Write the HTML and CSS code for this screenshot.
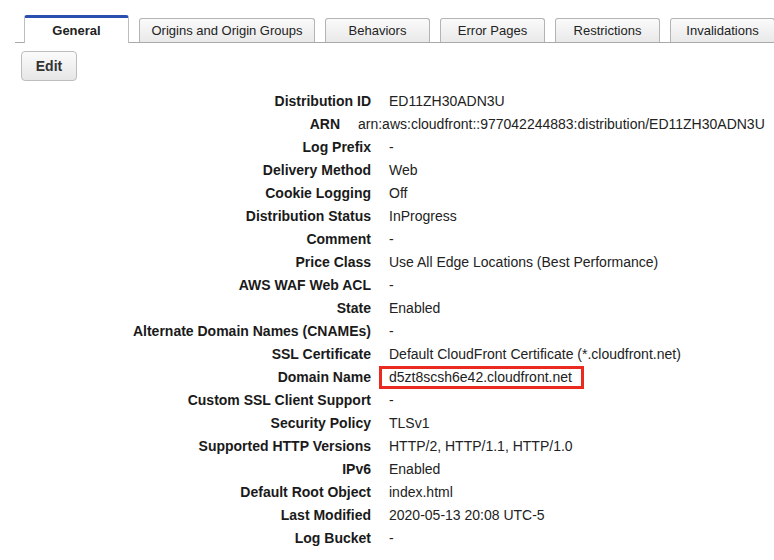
FILE: index.html
```html
<!DOCTYPE html>
<html>
<head>
<meta charset="utf-8">
<link rel="stylesheet" href="styles.css">
</head>
<body>
<div class="tabs">
  <div class="tab active">General</div>
  <div class="tab wide">Origins and Origin Groups</div>
  <div class="tab">Behaviors</div>
  <div class="tab">Error Pages</div>
  <div class="tab">Restrictions</div>
  <div class="tab">Invalidations</div>
</div>
<div class="toolbar"><button class="btn">Edit</button></div>
<div class="details">
  <div class="row"><div class="label">Distribution ID</div><div class="value">ED11ZH30ADN3U</div></div>
  <div class="row arn"><div class="label">ARN</div><div class="value">arn:aws:cloudfront::977042244883:distribution/ED11ZH30ADN3U</div></div>
  <div class="row"><div class="label">Log Prefix</div><div class="value">-</div></div>
  <div class="row"><div class="label">Delivery Method</div><div class="value">Web</div></div>
  <div class="row"><div class="label">Cookie Logging</div><div class="value">Off</div></div>
  <div class="row"><div class="label">Distribution Status</div><div class="value">InProgress</div></div>
  <div class="row"><div class="label">Comment</div><div class="value">-</div></div>
  <div class="row"><div class="label">Price Class</div><div class="value">Use All Edge Locations (Best Performance)</div></div>
  <div class="row"><div class="label">AWS WAF Web ACL</div><div class="value">-</div></div>
  <div class="row"><div class="label">State</div><div class="value">Enabled</div></div>
  <div class="row"><div class="label">Alternate Domain Names (CNAMEs)</div><div class="value">-</div></div>
  <div class="row"><div class="label">SSL Certificate</div><div class="value">Default CloudFront Certificate (*.cloudfront.net)</div></div>
  <div class="row"><div class="label">Domain Name</div><div class="value"><span class="highlight">d5zt8scsh6e42.cloudfront.net</span></div></div>
  <div class="row"><div class="label">Custom SSL Client Support</div><div class="value">-</div></div>
  <div class="row"><div class="label">Security Policy</div><div class="value">TLSv1</div></div>
  <div class="row"><div class="label">Supported HTTP Versions</div><div class="value">HTTP/2, HTTP/1.1, HTTP/1.0</div></div>
  <div class="row"><div class="label">IPv6</div><div class="value">Enabled</div></div>
  <div class="row"><div class="label">Default Root Object</div><div class="value">index.html</div></div>
  <div class="row"><div class="label">Last Modified</div><div class="value">2020-05-13 20:08 UTC-5</div></div>
  <div class="row"><div class="label">Log Bucket</div><div class="value">-</div></div>
</div>
</body>
</html>
```

FILE: styles.css
```css
html, body {
  margin: 0;
  padding: 0;
  background: #fff;
  font-family: "Liberation Sans", Arial, sans-serif;
  font-size: 14px;
  color: #222;
  overflow: hidden;
}
.tabs {
  display: flex;
  align-items: flex-end;
  gap: 10px;
  margin-top: 15px;
  margin-left: 15px;
  padding-left: 9px;
  border-bottom: 1px solid #a9a9a9;
  height: 27px;
  white-space: nowrap;
}
.tab {
  box-sizing: border-box;
  flex: 0 0 105px;
  height: 24px;
  border: 1px solid #b4b4b4;
  border-bottom: none;
  border-radius: 3px 3px 0 0;
  background: linear-gradient(#fafafa, #e9e9e9);
  text-align: center;
  line-height: 23px;
  font-size: 13px;
  color: #222;
}
.tab.wide { flex-basis: 176px; }
.tab.active {
  flex-basis: 105px;
  height: 28px;
  margin-bottom: -1px;
  background: #fff;
  border-color: #bdbdbd;
  border-top: 3px solid #2a4fb0;
  font-weight: bold;
  line-height: 26px;
}
.toolbar {
  padding: 8px 0 0 21px;
}
.btn {
  box-sizing: border-box;
  width: 56px;
  height: 30px;
  border: 1px solid #bdbdbd;
  border-radius: 4px;
  background: linear-gradient(#fbfbfb, #e6e6e6);
  font-family: "Liberation Sans", Arial, sans-serif;
  font-size: 14px;
  font-weight: bold;
  color: #333;
  padding: 0;
}
.details {
  padding-top: 9px;
}
.row {
  display: flex;
  gap: 18px;
  height: 23px;
  line-height: 23px;
  white-space: nowrap;
}
.label {
  flex: 0 0 371px;
  text-align: right;
  font-weight: bold;
  color: #1a1a1a;
}
.row.arn .label { flex-basis: 340px; }
.value { color: #222; }
.highlight {
  display: inline-block;
  box-sizing: border-box;
  height: 23px;
  line-height: 17px;
  margin-left: -10px;
  padding: 0 9px 0 7px;
  border: 3px solid #ea2a1f;
  vertical-align: top;
}
```
